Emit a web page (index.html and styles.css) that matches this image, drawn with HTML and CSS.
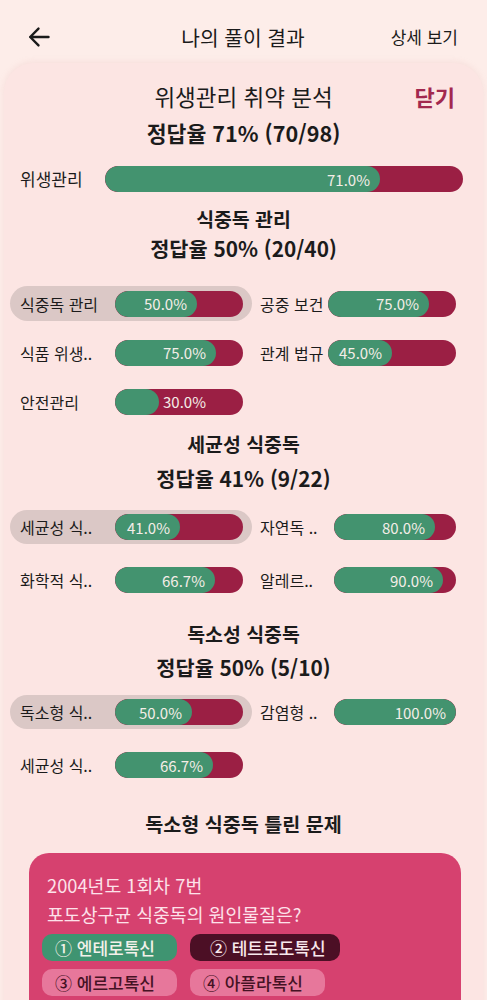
FILE: index.html
```html
<!DOCTYPE html>
<html lang="ko">
<head>
<meta charset="utf-8">
<title>나의 풀이 결과</title>
<link rel="stylesheet" href="styles.css">
</head>
<body>
<header class="topbar">
  <span class="back"><svg width="22" height="22" viewBox="0 0 22 22"><path d="M20.5 11H2.2M10.5 2.6L2.2 11l8.3 8.4" fill="none" stroke="#1a1a1a" stroke-width="2.4" stroke-linecap="round" stroke-linejoin="round"/></svg></span>
  <h1 class="top-title">나의 풀이 결과</h1>
  <span class="top-link">상세 보기</span>
</header>
<main class="sheet">
  <div class="sheet-head">
    <span></span>
    <h2 class="sheet-title">위생관리 취약 분석</h2>
    <span class="close">닫기</span>
  </div>
  <p class="rate rate-main">정답율 71% (70/98)</p>
  <div class="main-row">
    <span class="main-label">위생관리</span>
    <div class="bar"><div class="fill" style="width:275px"><span class="val">71.0%</span></div></div>
  </div>

  <section class="sec sec-1">
    <h3 class="sec-title">식중독 관리</h3>
    <p class="rate">정답율 50% (20/40)</p>
    <div class="grid">
      <div class="cell cell-left active"><span class="label">식중독 관리</span><div class="bar"><div class="fill" style="width:82px"><span class="val">50.0%</span></div></div></div>
      <div class="cell cell-right"><span class="label">공중 보건</span><div class="bar"><div class="fill" style="width:101px"><span class="val">75.0%</span></div></div></div>
      <div class="cell cell-left"><span class="label">식품 위생..</span><div class="bar"><div class="fill" style="width:101px"><span class="val">75.0%</span></div></div></div>
      <div class="cell cell-right"><span class="label">관계 법규</span><div class="bar"><div class="fill" style="width:64px"><span class="val">45.0%</span></div></div></div>
      <div class="cell cell-left"><span class="label">안전관리</span><div class="bar"><div class="fill" style="width:44px"></div><span class="val val-out">30.0%</span></div></div>
    </div>
  </section>

  <section class="sec sec-2">
    <h3 class="sec-title">세균성 식중독</h3>
    <p class="rate">정답율 41% (9/22)</p>
    <div class="grid">
      <div class="cell cell-left active"><span class="label">세균성 식..</span><div class="bar"><div class="fill" style="width:65px"><span class="val">41.0%</span></div></div></div>
      <div class="cell cell-right"><span class="label">자연독 ..</span><div class="bar"><div class="fill" style="width:101px"><span class="val">80.0%</span></div></div></div>
      <div class="cell cell-left"><span class="label">화학적 식..</span><div class="bar"><div class="fill" style="width:100px"><span class="val">66.7%</span></div></div></div>
      <div class="cell cell-right"><span class="label">알레르..</span><div class="bar"><div class="fill" style="width:109px"><span class="val">90.0%</span></div></div></div>
    </div>
  </section>

  <section class="sec sec-3">
    <h3 class="sec-title">독소성 식중독</h3>
    <p class="rate">정답율 50% (5/10)</p>
    <div class="grid">
      <div class="cell cell-left active"><span class="label">독소형 식..</span><div class="bar"><div class="fill" style="width:77px"><span class="val">50.0%</span></div></div></div>
      <div class="cell cell-right"><span class="label">감염형 ..</span><div class="bar"><div class="fill" style="width:100%"><span class="val">100.0%</span></div></div></div>
      <div class="cell cell-left"><span class="label">세균성 식..</span><div class="bar"><div class="fill" style="width:98px"><span class="val">66.7%</span></div></div></div>
    </div>
  </section>

  <h3 class="wrong-title">독소형 식중독 틀린 문제</h3>
  <div class="qcard">
    <p class="qline">2004년도 1회차 7번</p>
    <p class="qline qtext">포도상구균 식중독의 원인물질은?</p>
    <div class="opt-row">
      <span class="opt opt-correct">① 엔테로톡신</span>
      <span class="opt opt-chosen">② 테트로도톡신</span>
    </div>
    <div class="opt-row">
      <span class="opt">③ 에르고톡신</span>
      <span class="opt">④ 아플라톡신</span>
    </div>
  </div>
</main>
</body>
</html>
```

FILE: styles.css
```css
* { box-sizing: border-box; margin: 0; padding: 0; }

body {
  width: 487px;
  height: 1000px;
  overflow: hidden;
  background: #fdede9;
  font-family: "Noto Sans CJK KR", "Noto Sans", sans-serif;
  color: #1b1b1b;
}

.topbar {
  height: 63px;
  padding: 10px 29px 0 28px;
  display: grid;
  grid-template-columns: 1fr auto 1fr;
  align-items: center;
}
.back { justify-self: start; display: flex; }
.top-title { font-size: 20.3px; font-weight: 400; line-height: 28px; }
.top-link { justify-self: end; font-size: 17px; line-height: 24px; }

.sheet {
  margin: 0 4px;
  background: #fce5e3;
  border-radius: 30px 30px 0 0;
  box-shadow: 0 -1px 6px rgba(222, 170, 168, 0.22);
  padding-top: 15px;
  min-height: 937px;
}

.sheet-head {
  display: grid;
  grid-template-columns: 1fr auto 1fr;
  align-items: center;
  height: 36px;
  padding: 0 28px;
}
.sheet-title { font-size: 22.5px; font-weight: 400; line-height: 36px; }
.close { justify-self: end; font-size: 22px; font-weight: 700; color: #a2284f; line-height: 36px; }

.rate { text-align: center; font-size: 20.8px; font-weight: 700; line-height: 28px; }
.rate-main { font-size: 21.6px; line-height: 36px; margin-top: 1px; }

.main-row {
  margin-top: 15px;
  display: flex;
  align-items: center;
  padding: 0 20px 0 16px;
}
.main-label { width: 85px; font-size: 17px; line-height: 26px; }

.bar {
  flex: 1;
  height: 26px;
  border-radius: 13px;
  background: #9b1f44;
  display: flex;
  align-items: center;
  overflow: hidden;
}
.fill {
  height: 100%;
  border-radius: 13px;
  background: #43936f;
  display: flex;
  align-items: center;
  justify-content: flex-end;
  padding-right: 10px;
  flex-shrink: 0;
}
.val {
  color: #f4ede7;
  font-size: 15px;
  line-height: 1;
  white-space: nowrap;
}
.val-out { margin-left: 4px; }

.sec-title { text-align: center; font-size: 19.4px; font-weight: 700; line-height: 28px; }

.grid {
  display: grid;
  grid-template-columns: 242px 196px;
  column-gap: 8px;
  padding-left: 6px;
}
.cell { display: flex; align-items: center; height: 34px; }
.cell-left { padding: 0 9px 0 10px; }
.cell .label { font-size: 16px; line-height: 26px; white-space: nowrap; flex-shrink: 0; }
.cell-left .label { width: 95px; }
.cell-right .label { width: 74px; }
.active { background: #dbc8c6; border-radius: 18px; }

.sec-1 .sec-title { margin-top: 13px; }
.sec-1 .rate { margin-top: 1px; }
.sec-1 .grid { margin-top: 24px; row-gap: 14px; }
.sec-1 .cell { height: 35px; }
.sec-1 .cell-right .label { width: 68px; }

.sec-2 .sec-title { margin-top: 11px; }
.sec-2 .rate { margin-top: 6px; }
.sec-2 .grid { margin-top: 18px; row-gap: 19px; }

.sec-3 .sec-title { margin-top: 23px; }
.sec-3 .rate { margin-top: 5px; }
.sec-3 .grid { margin-top: 14px; row-gap: 19px; }

.wrong-title {
  margin-top: 28px;
  text-align: center;
  font-size: 19.6px;
  font-weight: 700;
  line-height: 28px;
}

.qcard {
  margin: 15px 22px 0 25px;
  background: #d6416f;
  border-radius: 20px 20px 0 0;
  padding: 18px 13px 24px;
}
.qline {
  padding-left: 5px;
  font-size: 18.3px;
  line-height: 28px;
  color: #fde2ea;
}
.qtext { margin-top: 1px; }

.opt-row { display: flex; gap: 13px; margin-top: 8px; }
.qtext + .opt-row { margin-top: 6px; }
.opt {
  height: 27px;
  padding: 0 22px 0 13px;
  border-radius: 10px;
  background: #e7779b;
  color: #451224;
  font-size: 17px;
  font-weight: 500;
  line-height: 27px;
  white-space: nowrap;
}
.opt-correct { background: #3f9471; color: #f3f1ea; }
.opt-chosen { background: #4c0f25; color: #f8e8ec; padding: 0 14px 0 20px; }
```
